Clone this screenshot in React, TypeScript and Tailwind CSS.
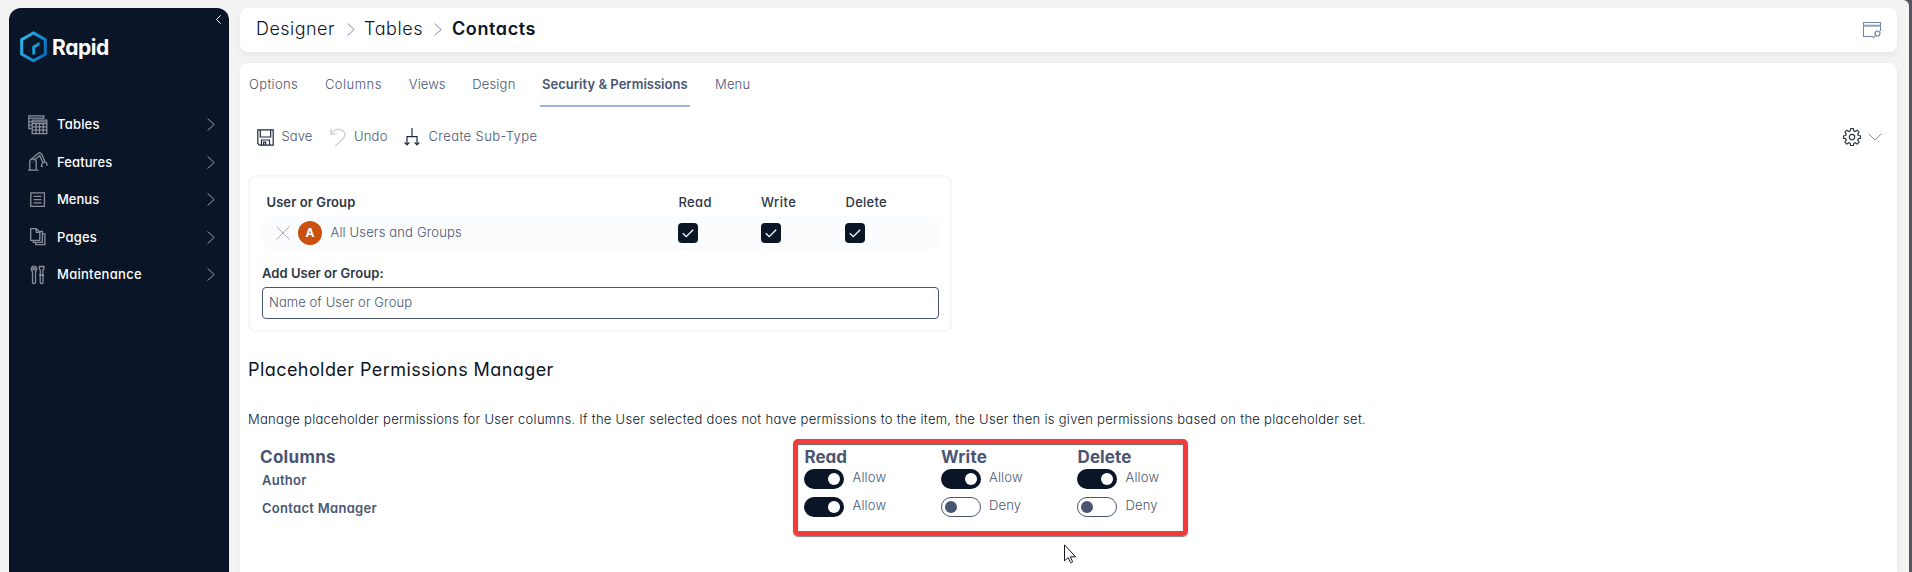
import type { ReactNode } from "react";

const navStroke = { fill: "none", stroke: "#8a8f9d", strokeWidth: 1.3 };

const nav: { label: string; tracking: string; icon: ReactNode }[] = [
  {
    label: "Tables",
    tracking: "tracking-[0.2px]",
    icon: (
      <svg width="20" height="20" viewBox="0 0 20 20" {...navStroke}>
        <path d="M3.5 13.5H.8V.8h15v3M.8 3.2h15M.8 6.8h3M.8 10.2h3" />
        <path d="M4.2 5.2h14.6v13.4H4.2zM4.2 8.6h14.6M4.2 11.9h14.6M4.2 15.2h14.6M7.9 8.6v10M11.5 8.6v10M15.2 8.6v10M4.2 6.8h14.6" />
      </svg>
    ),
  },
  {
    label: "Features",
    tracking: "tracking-[0.1px]",
    icon: (
      <svg width="20" height="20" viewBox="0 0 20 20" {...navStroke}>
        <path d="M0 18.2h10.5M1.8 18V9.5a2.6 2.6 0 0 1 2.6-2.3h1.2a2.6 2.6 0 0 1 2.6 2.3V18" />
        <path d="M3 7.6 10.3 1.2q1.2-.9 2.4 0l1.4 1.6L17 9.8M6.5 8l5.2-4.4 3.2 6.6M14.2 11.2l3.4-1.5M14.2 11.2l-.8 3 1.4.4M17.6 9.7l1.6 2.8-.7 1.2M4.8 10h.6" />
      </svg>
    ),
  },
  {
    label: "Menus",
    tracking: "tracking-[0px]",
    icon: (
      <svg width="20" height="20" viewBox="0 0 20 20" {...navStroke}>
        <path d="M2.8 2.8h13.6v13.6H2.8zM5.5 6.3h8M5.5 9.6h8M5.5 12.9h8" />
      </svg>
    ),
  },
  {
    label: "Pages",
    tracking: "tracking-[0.2px]",
    icon: (
      <svg width="20" height="20" viewBox="0 0 20 20" {...navStroke}>
        <path d="M2.7 1.6h5.6l3.5 3.5v8.3H2.7zM8.2 1.6v3.7h3.6M12 4.5h2.4v10.9H5.3v-2M14.6 6.8h2.3v10.8H7.7v-2" />
      </svg>
    ),
  },
  {
    label: "Maintenance",
    tracking: "tracking-[0.28px]",
    icon: (
      <svg width="20" height="20" viewBox="0 0 20 20" {...navStroke}>
        <path d="M5 1.3v3.2h2V1.3a3 3 0 0 1 1 4.7q-.5.6-.5 1.2v10.3q0 1-1.5 1t-1.5-1V7.2q0-.6-.5-1.2A3 3 0 0 1 5 1.3zM11.3 1.5h4.600v2.3l-1 1.2v5h-2.6V5l-1-1.2zM11 10.3h5.3M12.2 10.5v7q0 1 1.4 1t1.4-1v-7" />
      </svg>
    ),
  },
];

const tabs = [
  { label: "Options", cls: "w-[48.5px] tracking-[0.35px]" },
  { label: "Columns", cls: "w-[56.5px] tracking-[0.5px]" },
  { label: "Views", cls: "w-[36px] tracking-[0.1px]" },
  { label: "Design", cls: "w-[42.5px] tracking-[0.2px]" },
];

function Chevron({ className }: { className: string }) {
  return (
    <svg className={className} viewBox="0 0 8 14" preserveAspectRatio="none" fill="none" stroke="currentColor">
      <path d="M.6.6 7.2 7 .6 13.4" vectorEffect="non-scaling-stroke" />
    </svg>
  );
}

function Sidebar() {
  return (
    <aside className="mt-2 ml-[9px] h-[564px] w-[220px] shrink-0 rounded-t-[12px] bg-[#0b1528]">
      <div className="flex h-[23px] justify-end pt-[7px] pr-[8px]">
        <Chevron className="h-[9px] w-[5px] rotate-180 text-white" />
      </div>
      <div className="flex h-8 items-center pl-[11px]">
        <svg width="27" height="32" viewBox="0 0 27 32" fill="none">
          <defs>
            <linearGradient id="hex" x1="0" y1="0.2" x2="1" y2="0.7">
              <stop offset="0" stopColor="#2fb4ea" />
              <stop offset="1" stopColor="#0673c0" />
            </linearGradient>
          </defs>
          <path d="M13.5 1.9 25.3 8.7V23.2L13.5 29.9 1.7 23.2V8.7z" stroke="url(#hex)" strokeWidth="3" />
          <path d="M12.2 23.5v-8.3L19.5 10.8v3.5l-4.3 2.6v6.6z" fill="#1b9ada" />
        </svg>
        <span className="pt-[2px] pl-[5px] text-[21px] leading-8 font-bold tracking-[-0.4px] text-white">Rapid</span>
      </div>
      <nav className="pt-[43.5px]">
        {nav.map((n) => (
          <div key={n.label} className="flex h-[37.5px] items-center pr-[14px] pb-px pl-[19px]">
            {n.icon}
            <span className={`pl-[9px] text-[13px] font-medium text-white ${n.tracking}`}>{n.label}</span>
            <Chevron className="ml-auto h-[13px] w-[8px] text-[#9a9fac]" />
          </div>
        ))}
      </nav>
    </aside>
  );
}

function Header() {
  return (
    <header className="flex h-11 items-center rounded-[8px] bg-white pr-[15px] pb-[3px] pl-4 text-[18px] text-[#0b1528] shadow-[0_3px_6px_rgba(0,0,0,0.05)]">
      <span className="w-[91px] font-light tracking-[0.45px]">Designer</span>
      <Chevron className="mt-[2px] h-[13px] w-[8px] text-[#7f89a8]" />
      <span className="ml-[9px] w-[70px] font-light tracking-[0.6px]">Tables</span>
      <Chevron className="mt-[2px] h-[13px] w-[8px] text-[#7f89a8]" />
      <span className="ml-[10px] font-semibold tracking-[0.6px]">Contacts</span>
      <svg className="mt-[3px] ml-auto" width="20" height="18" viewBox="0 0 20 18" fill="none" stroke="#6f86a8">
        <path d="M11 15.5H1.5V1.5h17v8.5" strokeWidth="1.1" />
        <path d="M1.5 4.7h17" stroke="#8fa3b4" strokeWidth="2" />
        <circle cx="15.5" cy="12.5" r="2.5" strokeWidth="1.2" />
        <path d="m13.6 14.3-2.7 2.9" strokeWidth="1.2" />
      </svg>
    </header>
  );
}

function Tabs() {
  return (
    <div className="flex h-[44px] pl-[9px] text-[13px] leading-[43px] font-light text-[#4a5573]">
      {tabs.map((t) => (
        <span key={t.label} className={`mr-[27.4px] whitespace-nowrap ${t.cls}`}>
          {t.label}
        </span>
      ))}
      <span className="-ml-[2px] w-[150px] border-b-2 border-[#a0b3e0] pl-[2px] font-semibold tracking-[0.02px] whitespace-nowrap">
        Security &amp; Permissions
      </span>
      <span className="ml-[25px] tracking-[0.15px]">Menu</span>
    </div>
  );
}

function Toolbar() {
  return (
    <div className="mt-[15px] flex h-[30px] items-center pr-[15px] pl-[17px] text-[13px] font-light text-[#4a5573]">
      <svg width="17" height="17" viewBox="0 0 17 17" fill="none" stroke="#1c2740" strokeWidth="1.2">
        <path d="M.8.8h15.4v15.4H2.6L.8 14.4zM3.3 1v7h10.4V1M4.5 16v-5h8v5M6.7 16v-3h2v3" />
      </svg>
      <span className="w-[47.5px] pl-[7.5px] tracking-[0.1px]">Save</span>
      <svg className="ml-[8px]" width="16" height="19" viewBox="0 0 16 19" fill="none" stroke="#cfcfd1" strokeWidth="1.3">
        <path d="M1 .8v5.4h5.6M1.2 6C3.5 2.5 7 .9 10 1.3c4.3.6 6.3 5 3.7 8.6L5.2 18.4" />
      </svg>
      <span className="w-[58.5px] pl-[8.5px] tracking-[0.2px]">Undo</span>
      <svg width="16" height="18" viewBox="0 0 16 18" fill="none" stroke="#1c2740" strokeWidth="1.2">
        <path d="M8 0v8.6M3 17V8.6h10V17M.6 14.3 3 16.8l2.4-2.5M10.6 14.3l2.4 2.5 2.4-2.5" />
      </svg>
      <span className="pl-[8.5px] tracking-[0.4px]">Create Sub-Type</span>
      <svg className="ml-auto" width="18" height="18" viewBox="0 0 18 18" fill="none" stroke="#2d3748" strokeWidth="1.2" strokeLinejoin="round">
        <path d="M7.6.7h2.8l.4 2.3 1.4.6 1.900-1.4 2 2-1.4 1.900.6 1.400 2.2.4v2.400l-2.2.4-.6 1.500 1.400 1.900-2 2-1.900-1.400-1.400.6-.4 2.200H7.600l-.4-2.200-1.400-.6-1.900 1.400-2-2 1.400-1.900-.6-1.500-2.100-.4V7.900l2.100-.4.6-1.400L1.900 4.200l2-2 1.900 1.400L7.200 3z" />
        <circle cx="9" cy="9.1" r="2.7" />
      </svg>
      <svg className="ml-[7px]" width="14" height="8" viewBox="0 0 14 8" fill="none" stroke="#7f89a8">
        <path d="m.6.7 6.4 6.4L13.4.7" />
      </svg>
    </div>
  );
}

function Check() {
  return (
    <span className="flex size-5 items-center justify-center rounded-[4px] bg-[#0b1528]">
      <svg width="12" height="9" viewBox="0 0 12 9" fill="none" stroke="#fff" strokeWidth="1.3">
        <path d="m.8 4.3 3.4 3.4L11.2.8" />
      </svg>
    </span>
  );
}

function Access() {
  return (
    <section className="mt-[28px] ml-2 h-[157px] w-[704px] rounded-[8px] border-2 border-[#f3f6fc] pr-[11px] pl-3 text-[13px]">
      <div className="flex h-[39px] items-center pt-[12px] pl-[4.5px] font-medium text-[#2d3748]">
        <span className="w-[412px] font-semibold tracking-[0.08px]">User or Group</span>
        <span className="w-[82.5px] tracking-[0.35px]">Read</span>
        <span className="w-[84.5px] tracking-[0.45px]">Write</span>
        <span className="tracking-[0.25px]">Delete</span>
      </div>
      <div className="flex h-[34px] items-center rounded-[8px] bg-[#fbfcfe] pl-[14px]">
        <svg width="14" height="14" viewBox="0 0 14 14" stroke="#a3aeca">
          <path d="m.5.5 13 13M13.5.5l-13 13" />
        </svg>
        <span className="ml-2 flex size-6 items-center justify-center rounded-full bg-[#c9500e] text-[12px] font-bold text-white">A</span>
        <span className="w-[356px] pl-[8.5px] font-light tracking-[0.15px] text-[#4a5573]">All Users and Groups</span>
        <Check />
        <span className="w-[63px]" />
        <Check />
        <span className="w-[64px]" />
        <Check />
      </div>
      <div className="h-[37px] pt-[13px] leading-5 font-semibold tracking-[0.05px] text-[#2d3748]">Add User or Group:</div>
      <div className="flex h-8 items-center rounded-[4px] border border-[#4a5573] px-[6px] font-light tracking-[0.07px] text-[#4a5573]">
        Name of User or Group
      </div>
    </section>
  );
}

function Toggle({ on }: { on: boolean }) {
  return (
    <div className="flex w-[136.5px] items-center">
      <span
        className={
          on
            ? "flex h-5 w-10 items-center justify-end rounded-full bg-[#0b1528] pr-1"
            : "flex h-5 w-10 items-center rounded-full border border-[#4a5573] pl-[3px]"
        }
      >
        <span className={on ? "size-3 rounded-full bg-white" : "size-3 rounded-full bg-[#4a5573]"} />
      </span>
      <span className="pb-[4px] pl-[8.5px] leading-4 font-light tracking-[0.15px] text-[#4a5573]">{on ? "Allow" : "Deny"}</span>
    </div>
  );
}

function Placeholders() {
  return (
    <section className="relative pt-[25px] pl-2 text-[13px]">
      <h2 className="text-[18px] leading-[26px] tracking-[0.43px] text-[#0b1528]">Placeholder Permissions Manager</h2>
      <p className="mt-[26px] leading-5 font-light tracking-[0.285px] whitespace-nowrap text-[#0b1528]">
        Manage placeholder permissions for User columns. If the User selected does not have permissions to the item, the User
        then is given permissions based on the placeholder set.
      </p>
      <div className="mt-[17px] flex h-[22px] items-center pl-3 text-[17px] leading-[22px] font-bold text-[#4a5573]">
        <span className="w-[544.5px] tracking-[0.3px]">Columns</span>
        <span className="w-[136.5px]">Read</span>
        <span className="w-[136.5px] tracking-[0.25px]">Write</span>
        <span className="tracking-[0.1px]">Delete</span>
      </div>
      <div className="mt-[1px] flex h-[20px] items-center pl-[14px]">
        <span className="w-[542px] pt-[3px] font-semibold tracking-[0.25px] text-[#4a5573]">Author</span>
        <Toggle on />
        <Toggle on />
        <Toggle on />
      </div>
      <div className="mt-[8px] flex h-[20px] items-center pl-[14px]">
        <span className="w-[542px] pt-[3px] font-semibold tracking-[0.29px] text-[#4a5573]">Contact Manager</span>
        <Toggle on />
        <Toggle on={false} />
        <Toggle on={false} />
      </div>
      <div className="absolute top-[107px] left-[553px] h-[97px] w-[395px] rounded-[5px] border-5 border-[#f43b3b] shadow-[0_1px_1px_rgba(0,0,0,0.5),inset_0_1px_1px_rgba(0,0,0,0.6)]" />
      <svg className="absolute top-[212px] left-[824px]" width="13" height="20" viewBox="0 0 13 20" fill="#fff" stroke="#14142a">
        <path d="M.5.9v16l3.7-3.400 2.400 5.200q1.200.5 2-.9l-2.200-5h5.200z" />
      </svg>
    </section>
  );
}

export default function App() {
  return (
    <div className="flex h-[572px] w-[1912px] overflow-hidden bg-[#55555d] font-['Inter',sans-serif] [font-feature-settings:'cv11']">
      <div className="flex w-[1909px] rounded-tr-[6px] bg-[#f3f3f3]">
        <Sidebar />
        <div className="ml-[11px] w-[1657px] pt-2">
          <Header />
          <main className="mt-[11px] h-[509px] rounded-t-[8px] bg-white shadow-[0_1px_6px_rgba(0,0,0,0.04)]">
            <Tabs />
            <Toolbar />
            <div className="-mt-[5px]">
              <Access />
              <Placeholders />
            </div>
          </main>
        </div>
      </div>
    </div>
  );
}
